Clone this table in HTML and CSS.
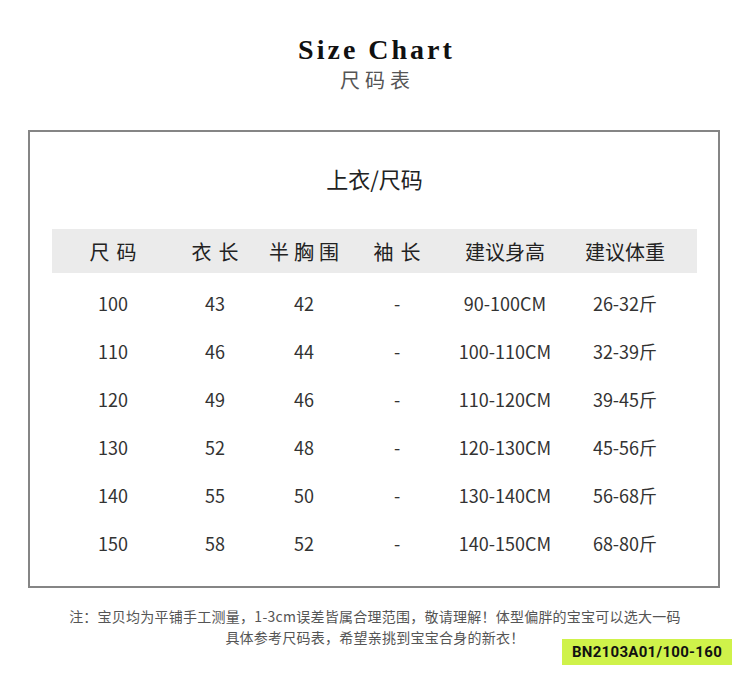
FILE: index.html
```html
<!DOCTYPE html>
<html lang="zh">
<head>
<meta charset="utf-8">
<title>Size Chart</title>
<link rel="stylesheet" href="styles.css">
</head>
<body>
<header class="heading">
  <h1 class="title">Size Chart</h1>
  <div class="subtitle">尺码表</div>
</header>
<section class="box">
  <h2 class="box-title">上衣/尺码</h2>
  <div class="row head">
    <span class="sp7">尺码</span><span class="sp7">衣长</span><span class="sp5">半胸围</span><span class="sp7">袖长</span><span>建议身高</span><span>建议体重</span>
  </div>
  <div class="rows">
    <div class="row"><span>100</span><span>43</span><span>42</span><span>-</span><span>90-100CM</span><span>26-32斤</span></div>
    <div class="row"><span>110</span><span>46</span><span>44</span><span>-</span><span>100-110CM</span><span>32-39斤</span></div>
    <div class="row"><span>120</span><span>49</span><span>46</span><span>-</span><span>110-120CM</span><span>39-45斤</span></div>
    <div class="row"><span>130</span><span>52</span><span>48</span><span>-</span><span>120-130CM</span><span>45-56斤</span></div>
    <div class="row"><span>140</span><span>55</span><span>50</span><span>-</span><span>130-140CM</span><span>56-68斤</span></div>
    <div class="row"><span>150</span><span>58</span><span>52</span><span>-</span><span>140-150CM</span><span>68-80斤</span></div>
  </div>
</section>
<footer class="notes">
  <p>注：宝贝均为平铺手工测量，1-3cm误差皆属合理范围，敬请理解！体型偏胖的宝宝可以选大一码</p>
  <p>具体参考尺码表，希望亲挑到宝宝合身的新衣！</p>
  <div class="badge">BN2103A01/100-160</div>
</footer>
</body>
</html>
```
FILE: styles.css
```css
html, body {
  margin: 0;
  padding: 0;
  background: #ffffff;
}
body {
  width: 750px;
  height: 682px;
  overflow: hidden;
  font-family: "Noto Sans CJK SC", "Noto Sans", sans-serif;
  color: #333;
}
.heading {
  padding-top: 33px;
  text-align: center;
}
.title {
  margin: 0;
  font-family: "Liberation Serif", "DejaVu Serif", serif;
  font-weight: 900;
  font-size: 28px;
  line-height: 34px;
  letter-spacing: 3px;
  color: #111;
  padding-left: 3px;
}
.subtitle {
  margin-top: 1px;
  font-size: 20px;
  line-height: 24px;
  letter-spacing: 5px;
  padding-left: 5px;
  color: #555;
}
.box {
  margin: 38px 0 0 28px;
  width: 692px;
  height: 458px;
  box-sizing: border-box;
  border: 2px solid #858585;
  padding: 31px 21px 0 22px;
}
.box-title {
  margin: 0 0 36px;
  text-align: center;
  font-weight: 400;
  font-size: 22px;
  line-height: 30px;
  color: #222;
}
.row {
  display: grid;
  grid-template-columns: 122px 82px 96px 90px 126px 114px;
  align-items: center;
  text-align: center;
  height: 48px;
  font-size: 18px;
  color: #333;
}
.row.head {
  height: 44px;
  background: #ebebeb;
  font-size: 20px;
  color: #222;
}
.sp7 { letter-spacing: 7px; padding-left: 7px; }
.sp5 { letter-spacing: 5px; padding-left: 5px; }
.rows {
  padding-top: 6px;
}
.notes {
  position: relative;
  margin-top: 18px;
  text-align: center;
  font-size: 14px;
  line-height: 21px;
  letter-spacing: 0.25px;
  color: #555;
}
.notes p {
  margin: 0;
}
.badge {
  position: absolute;
  right: 18px;
  top: 33px;
  width: 170px;
  height: 26px;
  box-sizing: border-box;
  background: #cff24a;
  font-family: Roboto, "Liberation Sans", sans-serif;
  font-weight: 700;
  font-size: 15px;
  line-height: 26px;
  color: #111;
  text-align: center;
  letter-spacing: 0.3px;
}
```
